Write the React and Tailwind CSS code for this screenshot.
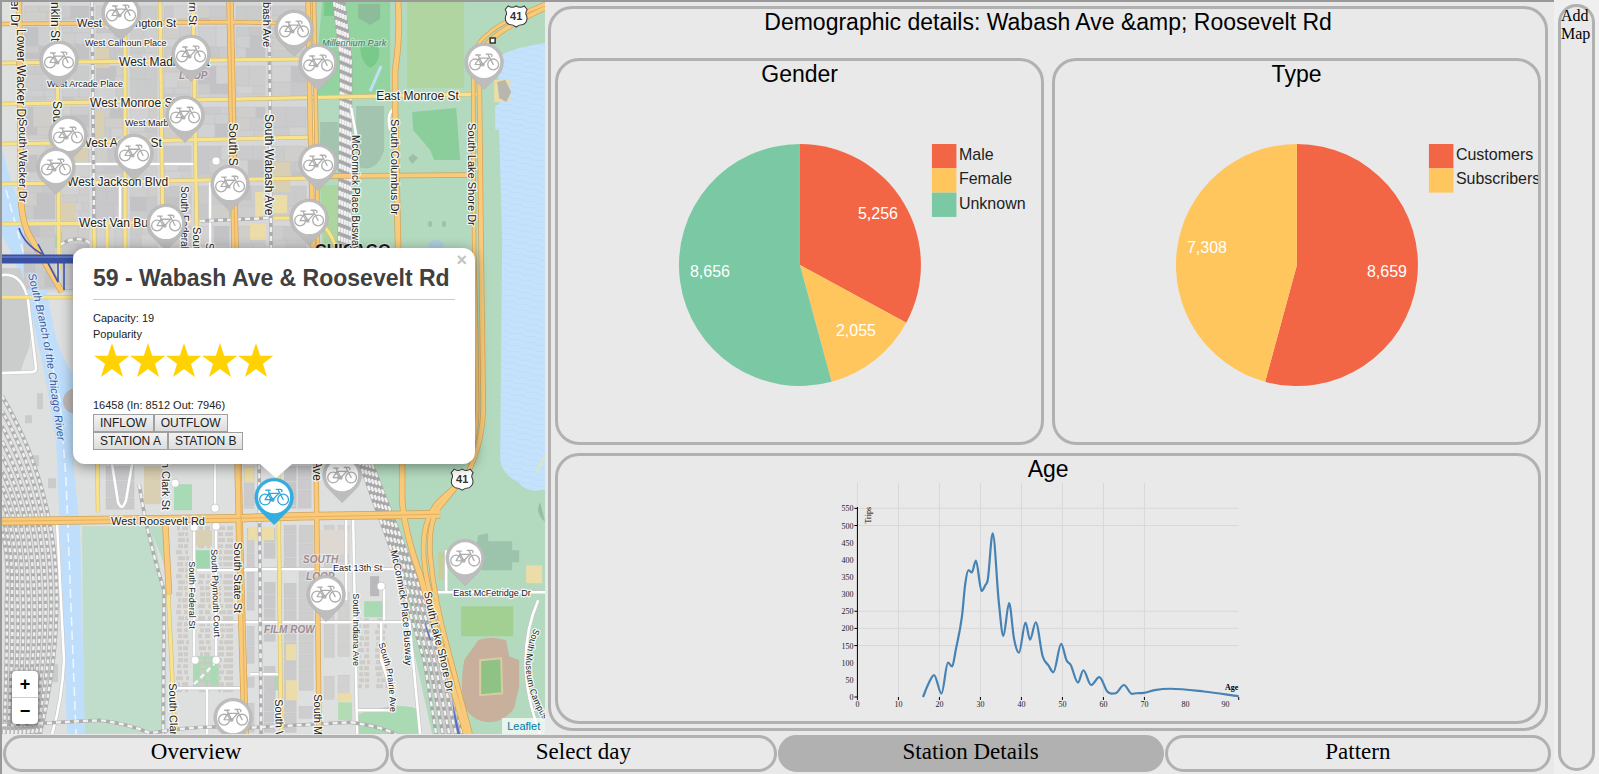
import React from "react";

/* ---------- map data ---------- */

const PINS = [
  [121, 13], [294, 29], [191, 54], [59, 60], [318, 63], [484, 62], [185, 115], [68, 135],
  [134, 153], [318, 163], [56, 167], [230, 184], [309, 218], [166, 223],
  [342, 475], [465, 558], [326, 594], [233, 717],
];

// [text, x, y, size, rotation, kind]
const LABELS = [
  ["West Washington St", 77, 27, 11, 0],
  ["West Calhoun Place", 85, 46, 9, 0],
  ["West Madison St", 119, 66, 12, 0],
  ["West Arcade Place", 47, 87, 9, 0],
  ["LOOP", 179, 79, 10, 0, "area"],
  ["West Monroe St", 90, 107, 12, 0],
  ["West Marble Pl", 125, 126, 9, 0],
  ["West Adams St", 80, 147, 12, 0],
  ["West Jackson Blvd", 67, 186, 12, 0],
  ["West Van Buren St", 79, 227, 12, 0],
  ["Millennium Park", 322, 46, 9, 0, "park"],
  ["East Monroe St", 376, 100, 12, 0],
  ["CHICAGO", 315, 256, 16, 0, "city"],
  ["West Roosevelt Rd", 111, 525, 11, 0],
  ["SOUTH", 303, 563, 10, 0, "area"],
  ["LOOP", 306, 580, 10, 0, "area"],
  ["FILM ROW", 264, 633, 10, 0, "area"],
  ["East 13th St", 333, 571, 9, 0],
  ["East McFetridge Dr", 453, 596, 9, 0],
  ["cker Dr", 11, -12, 12, 90],
  ["Lower Wacker Dr", 17, 29, 12, 90],
  ["South Wacker Dr", 19, 119, 11, 90],
  ["Franklin St", 51, -16, 12, 90],
  ["South Fr", 53, 101, 12, 90],
  ["Dearborn St", 189, -34, 11, 90],
  ["South State St", 229, 123, 12, 90],
  ["South Wabash Ave", 265, 114, 12, 90],
  ["Wabash Ave", 263, -14, 11, 90],
  ["McCormick Place Busway", 352, 135, 10, 90],
  ["South Columbus Dr", 391, 119, 11, 90],
  ["South Lake Shore Dr", 468, 123, 11, 90],
  ["South Federal St", 181, 186, 10, 90],
  ["South Clark", 193, 227, 11, 90],
  ["South Dearborn", 206, 243, 10, 90],
  ["South Clark St", 162, 439, 11, 90],
  ["South Michigan Ave", 313, 375, 12, 90],
  ["South Federal St", 189, 561, 9, 90],
  ["South Plymouth Court", 211, 549, 9, 88],
  ["South State St", 234, 542, 11, 90],
  ["South Clark St", 169, 683, 11, 89],
  ["South Indiana Ave", 353, 593, 9, 90],
  ["South Wabash Ave", 275, 699, 11, 89],
  ["South Michigan Ave", 314, 694, 11, 90],
];

const VIEW = { left: 2, top: 2, width: 543, height: 732 };

function makeRandom(seed) {
  let s = seed;
  return () => {
    s = (s * 16807) % 2147483647;
    return (s - 1) / 2147483646;
  };
}

function cityParcels() {
  const rnd = makeRandom(41);
  const cols = [2, 20, 58, 92, 126, 160, 194, 232, 268, 309];
  const rows = [2, 23, 62, 103, 142, 182, 222, 292];
  const tones = ["#c8c8ca", "#cbcbcd", "#cecfd0", "#d2d2d3", "#cacccc", "#c3c3c6", "#cdcdce", "#cfcecb"];
  const out = [];
  for (let c = 1; c < cols.length - 1; c++) {
    for (let r = 0; r < rows.length - 1; r++) {
      const x0 = cols[c] + 4;
      const y0 = rows[r] + 4;
      const w = cols[c + 1] - cols[c] - 7;
      const h = rows[r + 1] - rows[r] - 7;
      let y = 0;
      while (y < h) {
        const rh = Math.min(h - y, 6 + Math.round(rnd() * 15));
        const split = Math.round(w * (0.3 + rnd() * 0.45));
        out.push([x0, y0 + y, split, rh, tones[Math.floor(rnd() * tones.length)]]);
        out.push([x0 + split, y0 + y, w - split, rh, tones[Math.floor(rnd() * tones.length)]]);
        y += rh;
      }
    }
  }
  return out;
}

function lowerParcels() {
  const rnd = makeRandom(97);
  const out = [];
  const strips = [
    [247, 254, 528, 732, "#cdcdcf"], [264, 275, 528, 732, "#c9c9cc"],
    [284, 296, 525, 732, "#cbcbcd"], [299, 313, 525, 732, "#cececf"],
    [324, 334, 525, 700, "#d2d0ce"], [338, 349, 525, 700, "#d4d2d0"],
    [284, 296, 466, 508, "#c6c6c9"], [298, 311, 466, 508, "#cbcbcd"],
    [244, 254, 466, 508, "#cbcbcd"], [106, 134, 466, 510, "#cacacc"],
  ];
  strips.forEach(([x0, x1, y0, y1, tone]) => {
    let y = y0;
    while (y < y1) {
      const h = Math.min(y1 - y, 8 + Math.round(rnd() * 16));
      if (rnd() > 0.12) out.push([x0, y, x1 - x0, h, rnd() > 0.95 ? "#ecdca4" : tone]);
      y += h + 1;
    }
  });
  return out;
}

function houses() {
  const rnd = makeRandom(13);
  const out = [];
  [[176, 12], [198, 12], [217, 16], [357, 12], [375, 10]].forEach(([x, w]) => {
    const start = x > 300 ? 618 : 526;
    for (let y = start; y < 690; y += 6) {
      if (x === 198 && y > 548 && y < 570) continue;
      const a = 3 + Math.round(rnd() * 4);
      out.push([x + Math.round(rnd() * 2), y, a, 4]);
      out.push([x + a + 3, y, Math.max(3, w - a - 3), 4]);
    }
  });
  return out;
}

const PARCELS = cityParcels();
const LOWER = lowerParcels();
const HOUSES = houses();

const YELLOW_ROADS = [
  "M2 63 L300 59", "M2 104 L478 94", "M2 144 L313 137", "M2 184 L313 178", "M2 224 L190 222",
  "M57 2 L59 270", "M125 2 V250", "M160 2 L163 250", "M193 2 L197 250",
  "M2 297 H75", "M94 224 L98 512", "M107 222 V250", "M278 466 L281 734", "M168 590 L175 734",
  "M273 218 H312", "M324 226 Q334 238 336 250",
];

const ORANGE_ROADS = [
  ["M2 24 L232 22 L310 24", 3],
  ["M2 521 L240 518 L300 516 L440 514", 7],
  ["M230 2 L235 250 M238 464 L240 560 L245 734", 6],
  ["M308 2 L310 120 L313 250 M316 464 L319 734", 4],
  ["M314 2 L316 120 L318 250", 3],
  ["M398 2 Q400 40 395 70 V110 L398 250 M402 464 V500 Q404 530 420 575 L466 734", 5],
  ["M330 176 L474 175", 4],
  ["M545 4 Q500 22 488 34 Q474 44 473 62 L474 250 L476 330 L477 410 Q477 440 466 464", 3],
  ["M545 8 Q504 27 492 39 Q480 48 479 66 L481 250 L483 400 Q484 440 468 472 L440 506 Q428 520 430 555 Q434 600 448 650 L470 734", 4],
  ["M460 482 L440 500 Q420 520 424 560 Q426 585 436 612", 4],
  ["M19 2 L21 200 Q22 225 32 240 L62 292", 5],
  ["M165 520 L169 594", 5],
];

const WHITE_ROADS = [
  "M353 516 L357 734", "M346 516 V600", "M245 569 H400", "M195 622 H402", "M381 622 V660 Q392 690 392 710 H357",
  "M194 523 V660", "M216 520 V660", "M175 688 H243 M207 688 V734", "M215 464 V508", "M435 592 H545",
  "M446 550 V592", "M70 164 H195 M120 182 V222 M210 182 V250", "M2 275 Q22 272 28 300 L36 368 Q36 372 30 372 L2 373",
  "M57 523 L64 660 Q62 700 52 734", "M384 588 V620", "M250 674 H278", "M197 570 H262", "M112 464 L118 502 Q122 512 126 500 L132 464",
  "M351 108 L356 135 M395 108 Q386 112 390 130", "M409 620 L420 734", "M538 600 Q512 660 540 734",
];

const RAILS = [
  "M92 2 L94 220", "M269 2 L271 250", "M200 221 L268 218", "M139 484 Q148 540 164 590 L163 734", "M259 464 L261 734",
  "M2 725 L100 720 Q130 724 150 733 Q200 724 240 728 L350 722 Q380 726 396 734", "M60 245 Q76 234 90 243",
];

const BUSWAY = [];
for (let i = 0; i < 5; i++) {
  const o = i * 3;
  BUSWAY.push(`M${334 + o * 0.8} 2 L${341 + o * 0.8} 60 L${339 + o * 0.9} 250`);
  BUSWAY.push(`M${360 + o} 464 L${392 + o * 1.2} 552 Q${412 + o * 1.6} 620 ${424 + o * 1.7} 660 L${436 + o * 2.2} 734`);
}

const YARD = [];
for (let i = 0; i < 10; i++) {
  YARD.push(`M2 ${396 + i * 15} Q${46 - i * 4} ${470 + i * 10} ${55 - i * 5.4} ${560 + i * 5} Q${62 - i * 6} 640 ${40 - i * 4} 734`);
}

/* ---------- map drawing ---------- */

function Bike({ color }) {
  return (
    <g fill="none" stroke={color} strokeWidth="1.3" strokeLinecap="round" strokeLinejoin="round">
      <circle cx="-9" cy="2.4" r="5.4" />
      <circle cx="9" cy="2.4" r="5.4" />
      <path d="M-9 2.4 L-5.2 -3.8 L4.8 -4 L-1.4 2.6 Z M-1.4 2.6 L-6 -6.6 M-8.4 -7 H-3.8 M9 2.4 L3.8 -7.6 M2 -7.8 H6.4 Q8.6 -7.4 7.6 -5.6" />
      <circle cx="-1.4" cy="2.6" r="1.3" />
    </g>
  );
}

function Pin({ x, y, active }) {
  const color = active ? "#34aee0" : "#bdbdbd";
  return (
    <g transform={`translate(${x} ${y})`}>
      <path
        d="M0 27.500 L-12.500 15 A19.300 19.300 0 1 1 12.500 15 Z"
        fill={color}
        stroke={active ? "#2a9fd0" : "#b0b0b0"}
        strokeWidth="0.5"
      />
      <circle r="16" fill="#ffffff" />
      <Bike color={active ? "#2da6da" : "#adadad"} />
    </g>
  );
}

function Shield({ x, y }) {
  return (
    <g transform={`translate(${x} ${y})`}>
      <path
        d="M-8 -10 Q-4 -7.500 0 -10 Q4 -7.500 8 -10 L11 -6.500 Q8.500 -3 10.500 0 Q12 6 7 8.500 Q3 8.500 0 11 Q-3 8.500 -7 8.500 Q-12 6 -10.500 0 Q-8.500 -3 -11 -6.500 Z"
        fill="#fff"
        stroke="#333"
        strokeWidth="1"
      />
      <text y="4" textAnchor="middle" className="text-[11px] font-bold" fill="#333">41</text>
    </g>
  );
}

const LABEL_STYLE = {
  area: { fill: "#a08d95", fontWeight: 700, fontStyle: "italic" },
  park: { fill: "#2f7d6c", fontStyle: "italic" },
  city: { fill: "#1c1c1c", fontWeight: 700 },
};

function CityMap() {
  return (
    <svg
      viewBox={`${VIEW.left} ${VIEW.top} ${VIEW.width} ${VIEW.height}`}
      preserveAspectRatio="xMinYMin slice"
      className="absolute inset-0 h-full w-full font-['Liberation_Sans',sans-serif]"
      role="img"
      aria-label="Station map of Chicago"
    >
      <defs>
        <pattern id="waves" width="14" height="6" patternUnits="userSpaceOnUse" patternTransform="rotate(12)">
          <path d="M0 3 Q4 1 7 3 T14 3" fill="none" stroke="#b7d7f6" strokeWidth="0.6" />
        </pattern>
        <path id="riverLine" d="M28 274 Q42 330 48 370 L58 442" />
        <path id="museumLine" d="M534 628 Q513 676 546 724" />
        <path id="buswayLine" d="M390 551 Q406 610 405 680" />
        <path id="prairieLine" d="M378 644 Q390 672 390 714" />
        <path id="shoreLine" d="M424 592 Q430 625 440 660 L450 710" />
      </defs>

      <rect x="2" y="2" width="543" height="732" fill="#dee0df" />
      <rect x="20" y="2" width="290" height="290" fill="#d6d7d8" />

      {/* parks */}
      <path d="M308 2 H545 V734 H432 L384 516 L360 464 H320 V300 L322 250 Z" fill="#b3dabf" />
      <path d="M322 2 H390 V96 H314 Z" fill="#93d3a0" />
      <path d="M324 2 H334 V16 H324 Z M360 45 H378 Q382 62 370 68 Q360 62 360 45 Z" fill="#78c98a" />
      <path d="M407 2 H464 V88 H407 Z" fill="#b1d5a0" />
      <path d="M412 112 L456 108 L460 160 L434 160 L430 150 L413 130 Z" fill="#8bcd9b" />
      <path d="M356 106 H384 V150 Q376 175 356 166 Z M320 122 H338 V170 H320 Z" fill="#a3c5af" />
      <path d="M320 185 H342 V250 H324 Z" fill="#abd69f" />
      <path d="M408 158 L413 154 L418 158 L412 164 Z" fill="#9dbfa8" />
      <ellipse cx="430" cy="224" rx="2" ry="3" fill="#9fbfa8" />
      <ellipse cx="444" cy="224" rx="2" ry="3" fill="#9fbfa8" />
      <path d="M381 66 L370 91" stroke="#bfe0f2" strokeWidth="3" />
      <path d="M358 4 h22 v15 l-10 6 l-12 -7z" fill="#8dbd98" />
      <path d="M82 526 H152 L166 600 V734 H84 Z" fill="#c0dccb" />
      <path d="M150 526 H166 V570 Z" fill="#b9dac3" />
      <rect x="174" y="484" width="18" height="26" fill="#a8dbb5" />
      <rect x="196" y="550" width="14" height="18" fill="#9fd8ae" />
      <rect x="193" y="656" width="26" height="30" fill="#a9dab4" />
      <rect x="266" y="674" width="12" height="16" fill="#a9dab4" />
      <rect x="364" y="601" width="22" height="16" fill="#a9dab4" />
      <path d="M358 714 Q400 700 420 710 V734 H358 Z" fill="#a9dab4" />
      <rect x="338" y="702" width="14" height="18" fill="#b3dcb4" />
      <rect x="28" y="184" width="20" height="15" fill="#a5d6b2" />
      <rect x="214" y="208" width="18" height="9" fill="#a5d6b2" />
      <rect x="96" y="84" width="7" height="20" fill="#b0d8ba" />
      <path d="M62 262 H73 V290 H62 Z" fill="#9fd4b2" />
      <path d="M46 240 Q60 226 86 236 L90 248 H46 Z" fill="#a5d8b4" />

      {/* water */}
      <path d="M498 60 Q500 50 545 43 V489 Q528 494 518 482 Q502 474 500 460 L502 240 L499 130 L495 129 L495 106 L499 104 Z" fill="#c5e2fc" />
      <path d="M498 60 Q500 50 545 43 V489 Q528 494 518 482 Q502 474 500 460 L502 240 L499 130 L495 129 L495 106 L499 104 Z" fill="url(#waves)" />
      <path d="M2 148 L8 172 L26 222 L40 256 L54 330 Q62 360 73 374 L74 470 L80 530 L85 734 H67 L60 530 L56 440 L44 370 L26 290 L10 250 L2 236 Z" fill="#bedefc" />
      <path d="M6 190 L20 240 L42 320 L60 400 L66 480 L76 734" fill="none" stroke="#eef6fe" strokeWidth="1.500" strokeDasharray="9 5" />
      <ellipse cx="436" cy="246" rx="8" ry="6" fill="#adcede" />
      <path d="M536 472 L545 456" stroke="#d9e5c8" strokeWidth="3" />

      {/* buildings */}
      {PARCELS.map(([x, y, w, h, tone], i) => (
        <rect key={i} x={x} y={y} width={w} height={h} fill={tone} stroke="#c2c2c4" strokeWidth="0.4" />
      ))}
      {LOWER.map(([x, y, w, h, tone], i) => (
        <rect key={i} x={x} y={y} width={w} height={h} fill={tone} stroke="#c2c2c4" strokeWidth="0.4" />
      ))}
      {HOUSES.map(([x, y, w, h], i) => (
        <rect key={i} x={x} y={y} width={w} height={h} fill="#cfcbc7" />
      ))}
      <g fill="#d9cfb2">
        <rect x="95" y="112" width="9" height="28" />
        <rect x="76" y="148" width="12" height="14" />
        <rect x="62" y="203" width="14" height="20" />
        <rect x="96" y="48" width="13" height="20" />
        <rect x="144" y="466" width="18" height="38" />
        <rect x="272" y="162" width="18" height="30" />
        <rect x="196" y="530" width="16" height="16" />
      </g>
      <g fill="#ecdca8">
        <path d="M255 192 h9 v28 h-9z M273 195 h14 v18 h-14z M250 224 h16 v16 h-16z M248 527 h26 v13 h-26z M286 644 h10 v16 h-10z M286 680 h11 v20 h-11z M338 693 h14 v8 h-14z" />
        <path d="M494 80 h16 v22 h-16z M526 565 h16 v18 h-16z" />
      </g>
      <path d="M438 552 h6 v28 h-6z" fill="#c5cf9c" />
      <path d="M497 82 l8 -2 l6 12 l-5 10 l-7 -4z" fill="#b7b7ae" />
      <rect x="320" y="530" width="30" height="24" fill="#ddd8d1" />
      <rect x="370" y="576" width="9" height="20" fill="#b9b9bc" />
      <circle cx="76" cy="401" r="13" fill="#bdb9b7" />
      <path d="M2 268 H20 L30 300 V345 L20 372 H2 Z" fill="#cbcccc" />
      <g fill="#cacccc">
        <path d="M37 393 h6 v16 h-6z M25 415 h7 v8 h-7z M48 478 h8 v10 h-8z M32 455 h7 v11 h-7z M48 664 h10 v18 h-10z" />
      </g>
      <path d="M478 535 l10 -2 v8 h24 v9 h7 v12 h-7 v8 h-30 l-8 -12z" fill="#9cc3ac" />
      <path d="M461 606 H513 V636 H461 Z" fill="#a2cf92" />
      <path d="M540 502 q-6 10 5 20z" fill="#97bda5" />

      {/* stadium */}
      <path d="M478 640 Q490 635 506 640 L509 656 L519 660 V686 L514 708 Q504 722 488 722 Q470 720 463 704 Q460 680 464 660 Z" fill="#c8b09c" />
      <path d="M480 660 L501 658 L502 693 L480 695 Z" fill="#8fc284" stroke="#d6cda0" strokeWidth="2" />

      {/* rail yard and busway tracks */}
      <g fill="none" stroke="#b0b0b0" strokeWidth="4">
        {YARD.map((d, i) => <path key={i} d={d} />)}
      </g>
      <g fill="none" stroke="#eeeeee" strokeWidth="2.5">
        {YARD.map((d, i) => <path key={i} d={d} strokeDasharray="4 3" strokeDashoffset={i * 2} />)}
      </g>
      <path d="M408 560 L440 734 H472 L440 640 L412 560 Z" fill="#c9ccca" />
      <path d="M419 592 L432 640 L428 640 Z M452 700 L460 734 H456 Z" fill="#5870c0" />
      <g fill="none" stroke="#a8a8a8" strokeWidth="3.4">
        {BUSWAY.map((d, i) => <path key={i} d={d} />)}
      </g>
      <g fill="none" stroke="#f2f2f2" strokeWidth="2.4">
        {BUSWAY.map((d, i) => <path key={i} d={d} strokeDasharray="5 4" strokeDashoffset={i * 4} />)}
      </g>

      {/* minor roads */}
      <g fill="none" stroke="#c6c6c6" strokeWidth="3.800">
        {WHITE_ROADS.map((d) => <path key={d} d={d} />)}
      </g>
      <g fill="none" stroke="#ffffff" strokeWidth="2.600">
        {WHITE_ROADS.map((d) => <path key={d} d={d} />)}
      </g>
      <g fill="#fff" stroke="#c4c4c4" strokeWidth="0.800">
        {[[215, 508], [194, 527], [216, 526], [195, 660], [216, 660], [381, 586], [216, 161], [175, 483]].map(([x, y]) => (
          <circle key={`${x}-${y}`} cx={x} cy={y} r="4" />
        ))}
      </g>
      <path d="M194 684 L214 664" stroke="#f6f6f6" strokeWidth="2.500" strokeDasharray="5 4" />

      {/* railways */}
      <g fill="none" stroke="#adadad" strokeWidth="3.600">
        {RAILS.map((d) => <path key={d} d={d} />)}
      </g>
      <g fill="none" stroke="#f1f1f1" strokeWidth="2.500" strokeDasharray="5 4">
        {RAILS.map((d) => <path key={d} d={d} />)}
      </g>

      {/* streets */}
      <g fill="none" stroke="#d3bf78" strokeWidth="4.400">
        {YELLOW_ROADS.map((d) => <path key={d} d={d} />)}
      </g>
      <g fill="none" stroke="#f8e38c" strokeWidth="3.200">
        {YELLOW_ROADS.map((d) => <path key={d} d={d} />)}
      </g>
      <g fill="none" stroke="#d0a258">
        {ORANGE_ROADS.map(([d, w]) => <path key={d} d={d} strokeWidth={w + 1.4} />)}
      </g>
      <g fill="none" stroke="#f8ca79">
        {ORANGE_ROADS.map(([d, w]) => <path key={d} d={d} strokeWidth={w} />)}
      </g>
      <path d="M2 521 L240 518 L440 514 M230 2 L235 250 M240 464 L245 734" fill="none" stroke="#e3aa55" strokeWidth="0.800" />
      <path d="M19 228 Q24 244 42 254 M38 244 L58 282 L58 262 M64 262 V290" fill="none" stroke="#4058ad" strokeWidth="1.600" />
      <path d="M2 259 H73" stroke="#3a51a3" strokeWidth="9" />
      <path d="M2 257 H73" stroke="#5a70bc" strokeWidth="2" />
      <rect x="490" y="38" width="5" height="5" fill="#fff" stroke="#333" strokeWidth="1.500" />

      {/* names */}
      {LABELS.map(([text, x, y, size, angle, kind], i) => (
        <text
          key={i}
          transform={`translate(${x} ${y}) rotate(${angle})`}
          fontSize={size}
          fill="#222"
          stroke="#ffffff"
          strokeOpacity={kind ? 0.35 : 0.8}
          strokeWidth="2.500"
          strokeLinejoin="round"
          paintOrder="stroke"
          style={LABEL_STYLE[kind]}
        >
          {text}
        </text>
      ))}
      <text fontSize="11" fill="#34569a" stroke="#dcecfd" strokeWidth="2" paintOrder="stroke" className="italic">
        <textPath href="#riverLine">South Branch of the Chicago River</textPath>
      </text>
      <g fill="#222" stroke="#fff" strokeOpacity="0.800" strokeWidth="2.500" paintOrder="stroke" strokeLinejoin="round">
        <text fontSize="10"><textPath href="#buswayLine">McCormick Place Busway</textPath></text>
        <text fontSize="9"><textPath href="#prairieLine">South Prairie Ave</textPath></text>
        <text fontSize="11"><textPath href="#shoreLine">South Lake Shore Dr</textPath></text>
        <text fontSize="9"><textPath href="#museumLine">South Museum Campus</textPath></text>
      </g>

      <Shield x={516} y={16} />
      <Shield x={462} y={479} />
      {PINS.map(([x, y]) => <Pin key={`${x}-${y}`} x={x} y={y} />)}
      <Pin x={274} y={497} active />
    </svg>
  );
}

/* ---------- popup ---------- */

function Star() {
  return (
    <svg viewBox="0 0 36 36" className="size-9" aria-hidden="true">
      <path d="M19 1 L23.200 13.700 H36.500 L26 21.800 L30 35 L19 27 L8 35 L12 21.800 L1 13.700 H14.800 Z" fill="#ffd203" />
    </svg>
  );
}

function PopupButton({ children }) {
  return (
    <button
      type="button"
      className="h-[18px] border border-[#a0a0a0] bg-linear-to-b from-[#f4f4f4] to-[#dcdcdc] px-[6px] text-xs leading-4 text-[#222]"
    >
      {children}
    </button>
  );
}

function StationPopup() {
  return (
    <article className="absolute top-[246px] left-[71px] w-[402px] rounded-xl bg-white px-5 pt-4 pb-[14px] text-[11px] leading-4 text-[#222] shadow-[0_3px_14px_rgba(0,0,0,0.4)]">
      <svg viewBox="0 0 32 14" className="absolute top-full left-[187px] h-[14px] w-8" aria-hidden="true">
        <path d="M0 0 H32 L16 14 Z" fill="#fff" />
      </svg>
      <button type="button" aria-label="Close" className="absolute top-1 right-2 text-lg leading-4 font-bold text-[#c3c3c3]">
        ×
      </button>
      <h1 className="border-b border-[#ccc] pb-[7px] text-[23px] leading-7 font-bold whitespace-nowrap text-[#404040]">
        59 - Wabash Ave &amp; Roosevelt Rd
      </h1>
      <p className="mt-[10px]">Capacity: 19</p>
      <p>Popularity</p>
      <div className="flex" role="img" aria-label="5 stars">
        {[1, 2, 3, 4, 5].map((n) => <Star key={n} />)}
      </div>
      <p className="mt-[19px]">16458 (In: 8512 Out: 7946)</p>
      <div className="mt-px flex">
        <PopupButton>INFLOW</PopupButton>
        <PopupButton>OUTFLOW</PopupButton>
      </div>
      <div className="flex">
        <PopupButton>STATION A</PopupButton>
        <PopupButton>STATION B</PopupButton>
      </div>
    </article>
  );
}

/* ---------- charts ---------- */

function Card({ title, className = "", children }) {
  return (
    <section className={`flex min-h-0 min-w-0 flex-col overflow-hidden rounded-3xl border-3 border-[#b1b1b1] ${className}`}>
      <h3 className="pb-px text-center text-[23px] leading-[26px]">{title}</h3>
      {children}
    </section>
  );
}

const PIE = { cx: 242, cy: 177, r: 121 };

function slicePath(from, to) {
  const { cx, cy, r } = PIE;
  const point = (t) => `${cx + r * Math.sin(t * 2 * Math.PI)} ${cy - r * Math.cos(t * 2 * Math.PI)}`;
  return `M${cx} ${cy} L${point(from)} A${r} ${r} 0 ${to - from > 0.5 ? 1 : 0} 1 ${point(to)} Z`;
}

function PieChart({ slices }) {
  const total = slices.reduce((sum, s) => sum + s.value, 0);
  let start = 0;
  return (
    <svg viewBox="0 0 483 354" className="min-h-0 w-full flex-1 basis-0 text-base">
      {slices.map((s) => {
        const from = start;
        start += s.value / total;
        return <path key={s.name} d={slicePath(from, start)} fill={s.color} />;
      })}
      {slices.map((s) => (
        <text key={s.name} x={s.x} y={s.y} textAnchor="middle" fill="#fff">{s.value.toLocaleString("en-US")}</text>
      ))}
      {slices.map((s, i) => (
        <g key={s.name}>
          <rect x="374" y={56 + i * 24.3} width="24.500" height="24.300" fill={s.color} />
          <text x="401" y={72 + i * 24.3} fill="#222">{s.name}</text>
        </g>
      ))}
    </svg>
  );
}

const GENDER = [
  { name: "Male", value: 5256, color: "#f26645", x: 320, y: 131 },
  { name: "Female", value: 2055, color: "#ffc65d", x: 298, y: 248 },
  { name: "Unknown", value: 8656, color: "#7bc8a4", x: 152, y: 189 },
];

const TYPE = [
  { name: "Customers", value: 8659, color: "#f26645", x: 332, y: 189 },
  { name: "Subscribers", value: 7308, color: "#ffc65d", x: 152, y: 165 },
];

const AGES = [
  [16, 0], [17.3, 38], [18.7, 64], [20.5, 10], [22.1, 100], [23.1, 89], [24, 138], [25.5, 235], [26.3, 330], [27.1, 370],
  [27.9, 363], [28.9, 398], [30.3, 309], [31.2, 326], [31.8, 342], [33, 477], [34.5, 275], [35.6, 178], [37, 274],
  [38.2, 170], [39.4, 129], [41, 217], [42.1, 167], [43.5, 218], [45.2, 118], [46.6, 92], [47.8, 72],
  [49.7, 155], [51, 107], [52, 94], [53.8, 42], [55.1, 78], [57, 35], [59, 58], [61, 15], [62, 10],
  [63, 11], [65, 35], [67, 9], [68, 11], [69.8, 12], [72.5, 20], [76.3, 24], [84.5, 16], [93, 2],
];

const AX = { x0: 31, y0: 214, sx: 4.1, sy: 0.343 };
const px = (v) => AX.x0 + v * AX.sx;
const py = (v) => AX.y0 - v * AX.sy;

function smoothPath(data) {
  const p = data.map(([a, b]) => [px(a), py(b)]);
  const slope = (i) => (p[i + 1][1] - p[i][1]) / (p[i + 1][0] - p[i][0]);
  const tangents = p.map((_, i) => {
    if (i === 0) return slope(0);
    if (i === p.length - 1) return slope(i - 1);
    const a = slope(i - 1);
    const b = slope(i);
    if (a * b <= 0) return 0;
    const mean = (a + b) / 2;
    const limit = 3 * Math.min(Math.abs(a), Math.abs(b));
    return Math.sign(mean) * Math.min(Math.abs(mean), limit);
  });
  let d = `M${p[0][0]} ${p[0][1]}`;
  for (let i = 0; i < p.length - 1; i++) {
    const h = (p[i + 1][0] - p[i][0]) / 3;
    d += ` C${p[i][0] + h} ${p[i][1] + h * tangents[i]} ${p[i + 1][0] - h} ${p[i + 1][1] - h * tangents[i + 1]} ${p[i + 1][0]} ${p[i + 1][1]}`;
  }
  return d;
}

function AgeChart() {
  const xs = [0, 10, 20, 30, 40, 50, 60, 70, 80, 90];
  const ys = [0, 50, 100, 150, 200, 250, 300, 350, 400, 450, 500, 550];
  return (
    <svg viewBox="1 0 441 238" className="min-h-0 w-full flex-1 basis-0 font-['Liberation_Serif',serif] text-[8px]">
      <g stroke="#d8d8d8" strokeWidth="1">
        {xs.filter((v) => v <= 70).map((v) => <path key={v} d={`M${px(v)} 0 V214`} />)}
        {[150, 200, 250, 500, 550].map((v) => <path key={v} d={`M31 ${py(v)} H412`} />)}
      </g>
      <g stroke="#000" strokeWidth="1">
        <path d="M31 24 V217" />
        {[0, 150, 200, 250, 500, 550].map((v) => <path key={v} d={`M28 ${py(v)} H31`} />)}
        {[10, 20, 30, 40, 50, 60, 70, 93].map((v) => <path key={v} d={`M${px(v)} 214 V217`} />)}
      </g>
      <g fill="#222">
        {ys.map((v) => <text key={v} x="27" y={py(v) + 3} textAnchor="end">{v}</text>)}
        {xs.map((v) => <text key={v} x={v === 90 ? 399 : px(v)} y="224" textAnchor="middle">{v}</text>)}
      </g>
      <path d={smoothPath(AGES)} fill="none" stroke="#4682b4" strokeWidth="2.200" strokeLinejoin="round" />
      <text x="412" y="207" textAnchor="end" className="font-bold">Age</text>
      <text transform="translate(45 24) rotate(-90)" textAnchor="end">Trips</text>
    </svg>
  );
}

/* ---------- page ---------- */

const TABS = ["Overview", "Select day", "Station Details", "Pattern"];

export default function App() {
  return (
    <div className="flex h-screen min-h-[600px] bg-[#efefef] font-['Liberation_Sans',sans-serif] text-black">
      <main className="flex min-w-0 flex-1 flex-col border-t-2 border-l-2 border-[#999] bg-[#e9e9e9]">
        <div className="flex min-h-0 flex-1">
          <section className="relative w-[35%] shrink-0 overflow-hidden">
            <CityMap />
            <StationPopup />
            <div className="absolute bottom-[10px] left-[10px] flex w-[26px] flex-col overflow-hidden rounded-sm bg-white text-lg leading-[26px] font-bold shadow-[0_1px_5px_rgba(0,0,0,0.65)]">
              <button type="button" aria-label="Zoom in" className="h-[27px] border-b border-[#ccc]">+</button>
              <button type="button" aria-label="Zoom out" className="h-[26px]">−</button>
            </div>
            <a href="#leaflet" className="absolute right-0 bottom-0 bg-white/70 px-[5px] text-[11px] leading-4 text-[#0078a8]">
              Leaflet
            </a>
          </section>

          <div className="flex min-w-0 flex-1 pt-1 pr-[6px] pb-[3px] pl-[3px]">
            <section className="flex min-w-0 flex-1 flex-col rounded-3xl border-3 border-[#b1b1b1] px-1 pb-1">
              <h2 className="mb-[22px] pb-px text-center text-[23px] leading-[26px]">
                {"Demographic details: Wabash Ave &amp; Roosevelt Rd"}
              </h2>
              <div className="grid min-h-0 flex-1 grid-rows-[387fr_271fr] gap-2">
                <div className="grid min-h-0 grid-cols-2 gap-2">
                  <Card title="Gender"><PieChart slices={GENDER} /></Card>
                  <Card title="Type"><PieChart slices={TYPE} /></Card>
                </div>
                <Card title="Age"><AgeChart /></Card>
              </div>
            </section>
          </div>
        </div>

        <nav className="mt-px mr-[3px] mb-[2px] ml-px grid grid-cols-4 gap-px font-['Liberation_Serif',serif] text-[23px]">
          {TABS.map((tab) => (
            <button
              key={tab}
              type="button"
              className={`h-[37px] rounded-full border-3 border-[#b1b1b1] pb-[3px] leading-7 ${tab === "Station Details" ? "bg-[#b1b1b1]" : "bg-[#e9e9e9]"}`}
            >
              {tab}
            </button>
          ))}
        </nav>
      </main>

      <aside className="mx-1 mt-1 mb-[3px] w-[37px] shrink-0 rounded-full border-3 border-[#b1b1b1] bg-[#e9e9e9] font-['Liberation_Serif',serif] text-base leading-[18px]">
        <button type="button" className="text-left">Add Map</button>
      </aside>
    </div>
  );
}
